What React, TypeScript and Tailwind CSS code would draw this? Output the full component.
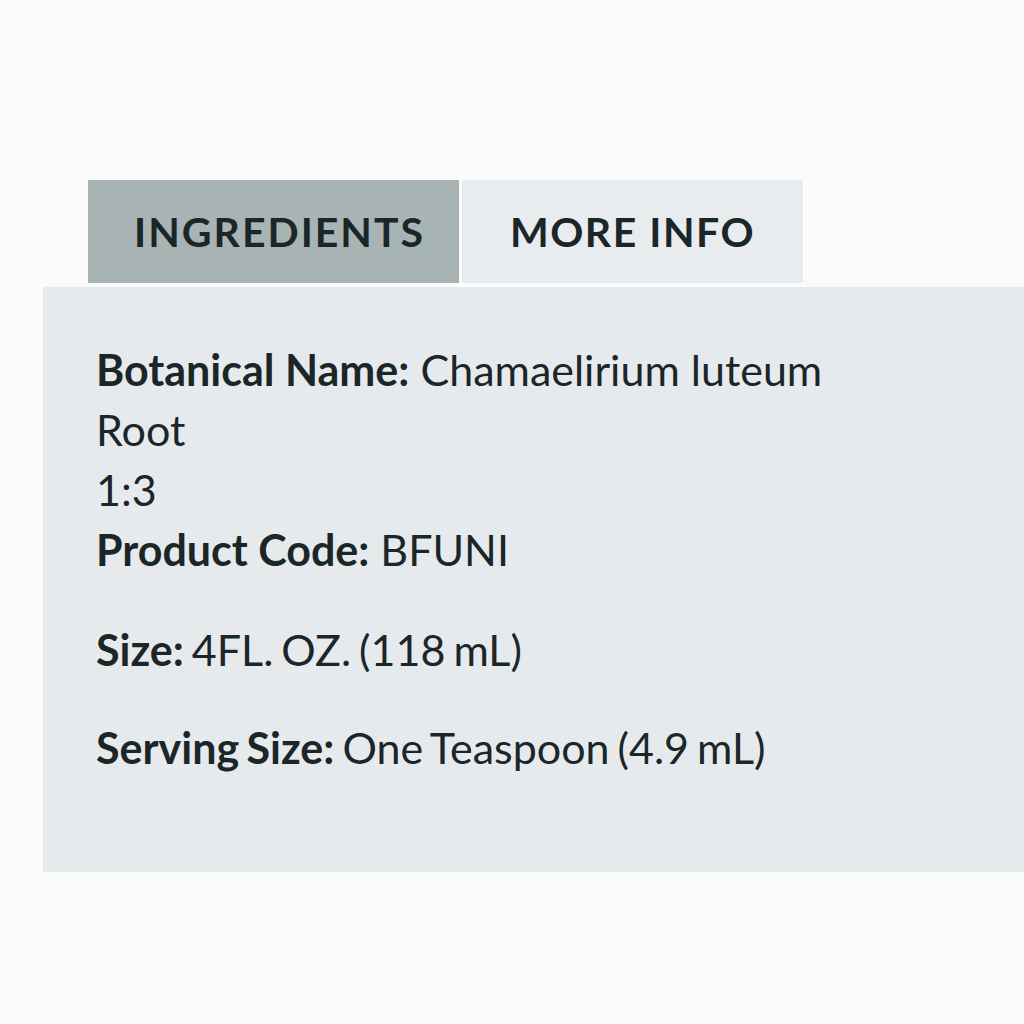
import React from 'react';

const rows = [
  { label: 'Botanical Name:', value: 'Chamaelirium luteum' },
];

export default function App() {
  return (
    <div className="w-[1024px] h-[1024px] bg-[#fafbfb] overflow-hidden pt-[180px] text-[#1b2629]" style={{ fontFamily: 'Lato, "Open Sans", sans-serif' }}>
      <div className="flex pl-[88px] gap-[3px] h-[103px]">
        <div className="w-[371px] bg-[#a7b4b3] flex items-center justify-center text-[41px] font-bold tracking-[2px] pl-[12px]">
          INGREDIENTS
        </div>
        <div className="w-[341px] bg-[#e9ecee] flex items-center justify-center text-[41px] font-bold tracking-[1.5px]">
          MORE INFO
        </div>
      </div>
      <div className="ml-[43px] mt-[4px] h-[585px] bg-[#e7eaec] pl-[53px] pt-[53px] text-[43px] leading-[60px]">
        {rows.map((r) => (
          <div key={r.label}>
            <span className="font-bold">{r.label}</span> {r.value}
          </div>
        ))}
        <div>Root</div>
        <div>1:3</div>
        <div>
          <span className="font-bold">Product Code:</span> BFUNI
        </div>
        <div className="mt-[40px] [word-spacing:-3px]">
          <span className="font-bold">Size:</span> 4FL. OZ. (118 mL)
        </div>
        <div className="mt-[38px] [word-spacing:-3px]">
          <span className="font-bold">Serving Size:</span> One Teaspoon (4.9 mL)
        </div>
      </div>
    </div>
  );
}
